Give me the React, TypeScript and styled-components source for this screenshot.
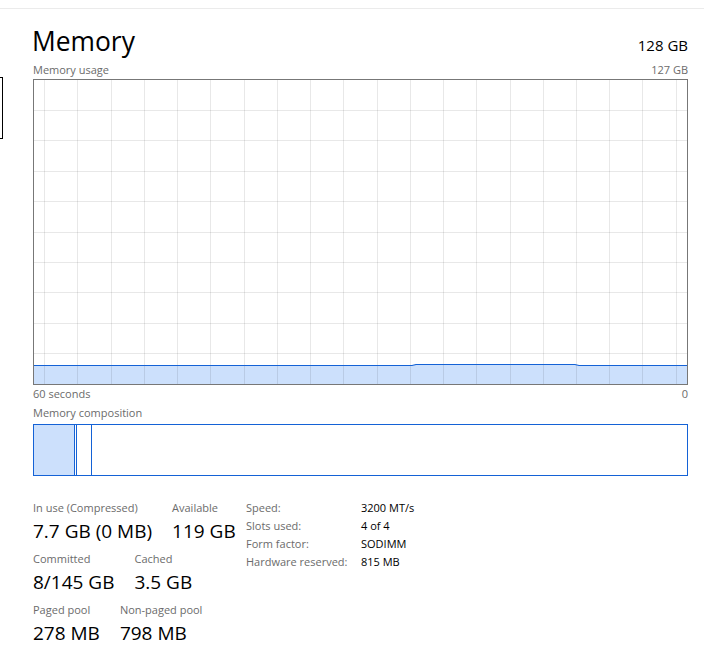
import React from 'react';
import styled, { createGlobalStyle } from 'styled-components';

// --- Dados ---
const stats = [
  [
    { label: 'In use (Compressed)', value: '7.7 GB (0 MB)' },
    { label: 'Available', value: '119 GB' },
  ],
  [
    { label: 'Committed', value: '8/145 GB' },
    { label: 'Cached', value: '3.5 GB' },
  ],
  [
    { label: 'Paged pool', value: '278 MB' },
    { label: 'Non-paged pool', value: '798 MB' },
  ],
];

const details = [
  ['Speed:', '3200 MT/s'],
  ['Slots used:', '4 of 4'],
  ['Form factor:', 'SODIMM'],
  ['Hardware reserved:', '815 MB'],
];

const BLUE = '#1462d6';
const FILL = '#cce0fc';

// grade do gráfico (posições medidas em px)
const vLines = [10, 43, 77, 110, 143, 176, 210, 243, 276, 309, 343, 376, 409, 442, 476, 509, 542, 575, 608, 642];
const hLines = [30, 60, 91, 121, 152, 182, 212, 243, 273];

// --- Styled Components ---
const GlobalStyle = createGlobalStyle`
  html, body { margin: 0; padding: 0; background: #fff; }
  body { font-family: "Open Sans", "Liberation Sans", sans-serif; color: #000; }
`;

const Page = styled.div`
  width: 704px; height: 652px; overflow: hidden; background: #fff;
  display: flex; flex-direction: column;
`;

const TopBar = styled.div` height: 8px; border-bottom: 1px solid #ebebeb; flex: none; `;

const Body = styled.div` display: flex; flex: 1; `;

const Sidebar = styled.div`
  width: 3px; flex: none; overflow: hidden;
  display: flex; justify-content: flex-end; align-items: flex-start;
`;

const Thumb = styled.div`
  flex: none; width: 200px; height: 60px; margin-top: 68px;
  border: 1px solid #000;
`;

const Panel = styled.div`
  flex: 1; min-width: 0; padding: 16px 16px 0 30px;
  display: flex; flex-direction: column;
`;

const Header = styled.div`
  display: flex; justify-content: space-between; align-items: baseline;
  height: 32px;
`;

const Title = styled.h1`
  margin: 0 0 0 -1px; font-size: 26.4px; font-weight: 400; line-height: 32px;
`;

const Total = styled.span` font-size: 15px; line-height: 32px; `;

const Caption = styled.div<{ $gap?: number }>`
  display: flex; justify-content: space-between;
  font-size: 11px; line-height: 14px; color: #6b6b6b;
  margin-top: ${(p) => p.$gap ?? 4}px;
`;

const Graph = styled.div`
  margin-top: 2px; height: 304px; border: 1px solid #777;
  svg { display: block; width: 100%; height: 100%; }
`;

const Composition = styled.div`
  margin-top: 4px; height: 50px; border: 1px solid ${BLUE};
  display: flex;
`;

const Segment = styled.div<{ $w?: number; $filled?: boolean }>`
  flex: ${(p) => (p.$w ? `0 0 ${p.$w}px` : '1')};
  background: ${(p) => (p.$filled ? FILL : '#fff')};
  border-right: ${(p) => (p.$w ? `1px solid ${BLUE}` : 'none')};
`;

const Stats = styled.div` display: flex; margin-top: 23px; `;

const StatColumn = styled.div`
  width: 213px; flex: none; padding-top: 2px;
  display: flex; flex-direction: column; gap: 9px;
`;

const StatRow = styled.div` display: flex; gap: 20px; `;

const Stat = styled.div` display: flex; flex-direction: column; `;

const StatLabel = styled.span` font-size: 11px; line-height: 14px; color: #6b6b6b; `;

const StatValue = styled.span`
  font-size: 19px; line-height: 24px; margin-top: 4px; white-space: nowrap;
`;

const Details = styled.div`
  display: grid; grid-template-columns: 115px auto; grid-auto-rows: 18px;
  font-size: 11px; line-height: 18px; align-content: start;
`;

const DetailLabel = styled.span` color: #6b6b6b; `;
const DetailValue = styled.span` color: #000; `;

function UsageGraph() {
  const line = 'M0 285.5 L378 285.5 L382 284.5 L541 284.5 L545 285.5 L653 285.5';
  return (
    <svg viewBox="0 0 653 304" preserveAspectRatio="none">
      <path d={`${line} L653 304 L0 304 Z`} fill={FILL} />
      <g shapeRendering="crispEdges" stroke="rgba(0,0,0,0.09)" strokeWidth="1">
        {vLines.map((x) => <line key={`v${x}`} x1={x + 0.5} y1={0} x2={x + 0.5} y2={304} />)}
        {hLines.map((y) => <line key={`h${y}`} x1={0} y1={y + 0.5} x2={653} y2={y + 0.5} />)}
      </g>
      <path d={line} fill="none" stroke={BLUE} strokeWidth="1.2" />
    </svg>
  );
}

export default function App() {
  return (
    <Page>
      <GlobalStyle />
      <TopBar />
      <Body>
        <Sidebar><Thumb /></Sidebar>
        <Panel>
          <Header>
            <Title>Memory</Title>
            <Total>128 GB</Total>
          </Header>
          <Caption $gap={6}><span>Memory usage</span><span>127 GB</span></Caption>
          <Graph><UsageGraph /></Graph>
          <Caption $gap={2}><span>60 seconds</span><span>0</span></Caption>
          <Caption $gap={5}><span>Memory composition</span></Caption>
          <Composition>
            <Segment $w={40} $filled />
            <Segment $w={1} />
            <Segment $w={14} />
            <Segment />
          </Composition>
          <Stats>
            <StatColumn>
              {stats.map((row, i) => (
                <StatRow key={i}>
                  {row.map((s) => (
                    <Stat key={s.label}>
                      <StatLabel>{s.label}</StatLabel>
                      <StatValue>{s.value}</StatValue>
                    </Stat>
                  ))}
                </StatRow>
              ))}
            </StatColumn>
            <Details>
              {details.map(([k, v]) => (
                <React.Fragment key={k}>
                  <DetailLabel>{k}</DetailLabel>
                  <DetailValue>{v}</DetailValue>
                </React.Fragment>
              ))}
            </Details>
          </Stats>
        </Panel>
      </Body>
    </Page>
  );
}
